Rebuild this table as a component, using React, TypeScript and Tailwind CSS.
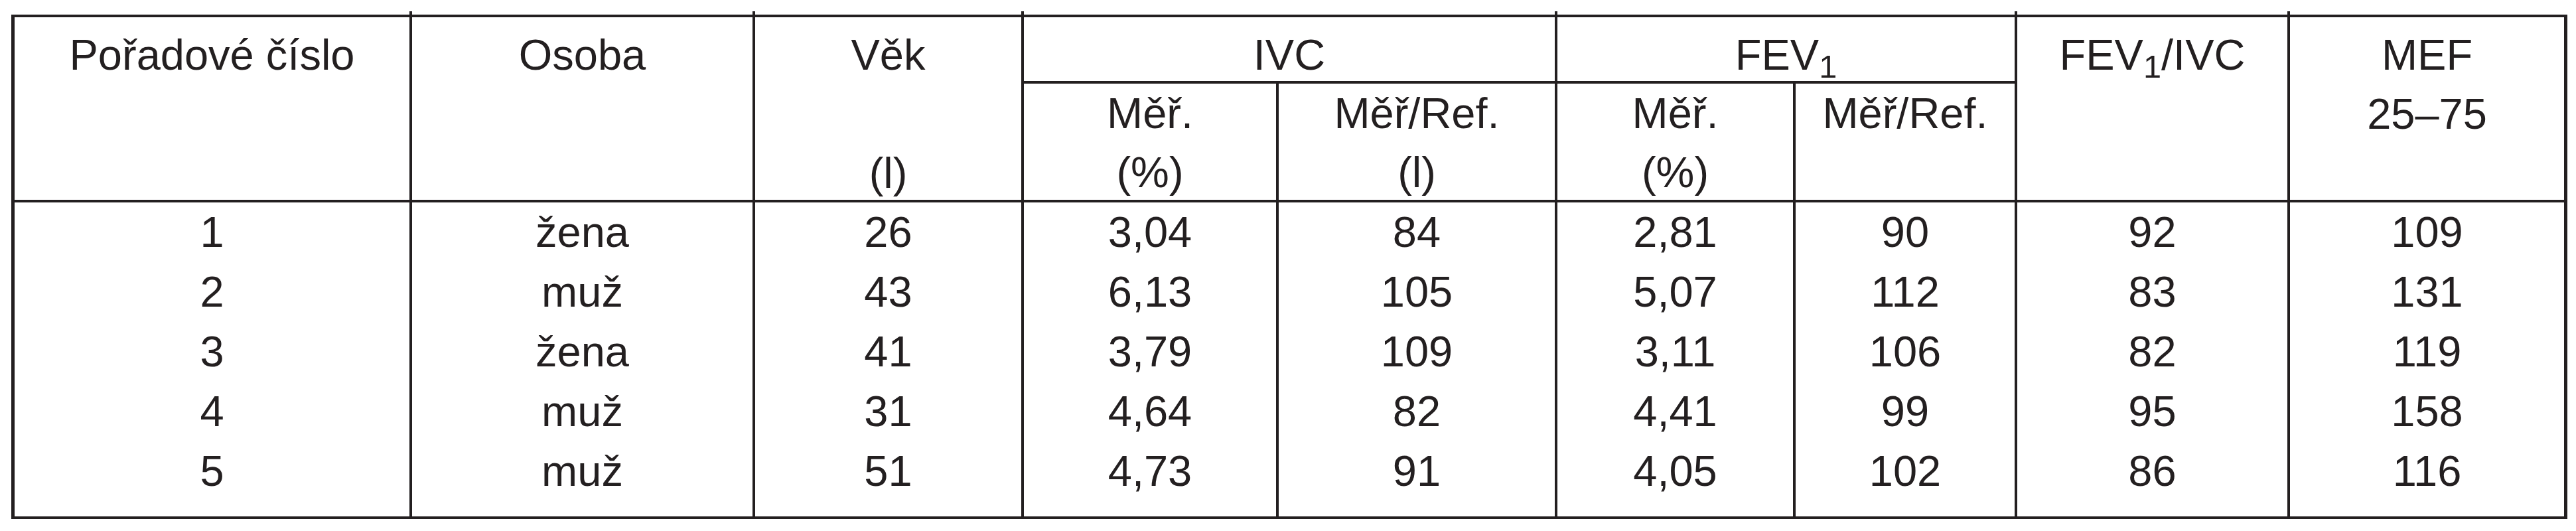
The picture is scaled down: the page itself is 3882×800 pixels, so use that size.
import type { ReactNode } from 'react'

const rows = [
  ['1', 'žena', '26', '3,04', '84', '2,81', '90', '92', '109'],
  ['2', 'muž', '43', '6,13', '105', '5,07', '112', '83', '131'],
  ['3', 'žena', '41', '3,79', '109', '3,11', '106', '82', '119'],
  ['4', 'muž', '31', '4,64', '82', '4,41', '99', '95', '158'],
  ['5', 'muž', '51', '4,73', '91', '4,05', '102', '86', '116'],
]

const line = 'border-[#231f20]'

// little tick where a column line pokes above the top rule
function Tick() {
  return <span className="absolute top-[-9px] right-[-4px] w-[4px] h-[5px] bg-[#231f20]" />
}

function Head({ children, className }: { children: ReactNode; className: string }) {
  return (
    <div className={`relative text-center leading-[89px] border-b-4 ${line} ${className}`}>
      {children}
    </div>
  )
}

export default function App() {
  return (
    <div className="bg-white min-h-[800px] pt-[22px] pl-[17px]">
      <div
        className={`grid w-[3852px] grid-cols-[599px_517px_405px_384px_420px_359px_334px_411px_413px] grid-rows-[100px_179px_473px] border-t-4 border-b-4 border-l-[5px] border-r-[5px] ${line} text-[#231f20] text-[65px]`}
        style={{ fontFamily: '"Liberation Sans", Arial, sans-serif' }}
      >
        <Head className="row-span-2 border-r-4 pt-[12px]">
          <Tick />
          <div>Pořadové číslo</div>
        </Head>
        <Head className="row-span-2 border-r-4 pt-[12px]">
          <Tick />
          <div>Osoba</div>
        </Head>
        <Head className="row-span-2 border-r-4 pt-[12px]">
          <Tick />
          <div>Věk</div>
          <div>&nbsp;</div>
          <div>(l)</div>
        </Head>
        <Head className="col-span-2 border-r-4 pt-[12px]">
          <Tick />
          <div>IVC</div>
        </Head>
        <Head className="col-span-2 border-r-4 pt-[12px]">
          <Tick />
          <div>
            FEV<sub>1</sub>
          </div>
        </Head>
        <Head className="row-span-2 border-r-4 pt-[12px]">
          <Tick />
          <div>
            FEV<sub>1</sub>/IVC
          </div>
        </Head>
        <Head className="row-span-2 pt-[12px]">
          <div>MEF</div>
          <div>25–75</div>
        </Head>

        <Head className="border-r-4">
          <div>Měř.</div>
          <div>(%)</div>
        </Head>
        <Head className="border-r-4">
          <div>Měř/Ref.</div>
          <div>(l)</div>
        </Head>
        <Head className="border-r-4">
          <div>Měř.</div>
          <div>(%)</div>
        </Head>
        <Head className="border-r-4">
          <div>Měř/Ref.</div>
        </Head>

        {rows[0].map((_, col) => (
          <div
            key={col}
            className={`text-center leading-[90px] ${col < 8 ? `border-r-4 ${line}` : ''}`}
          >
            {rows.map((r) => (
              <div key={r[0]}>{r[col]}</div>
            ))}
          </div>
        ))}
      </div>
    </div>
  )
}
